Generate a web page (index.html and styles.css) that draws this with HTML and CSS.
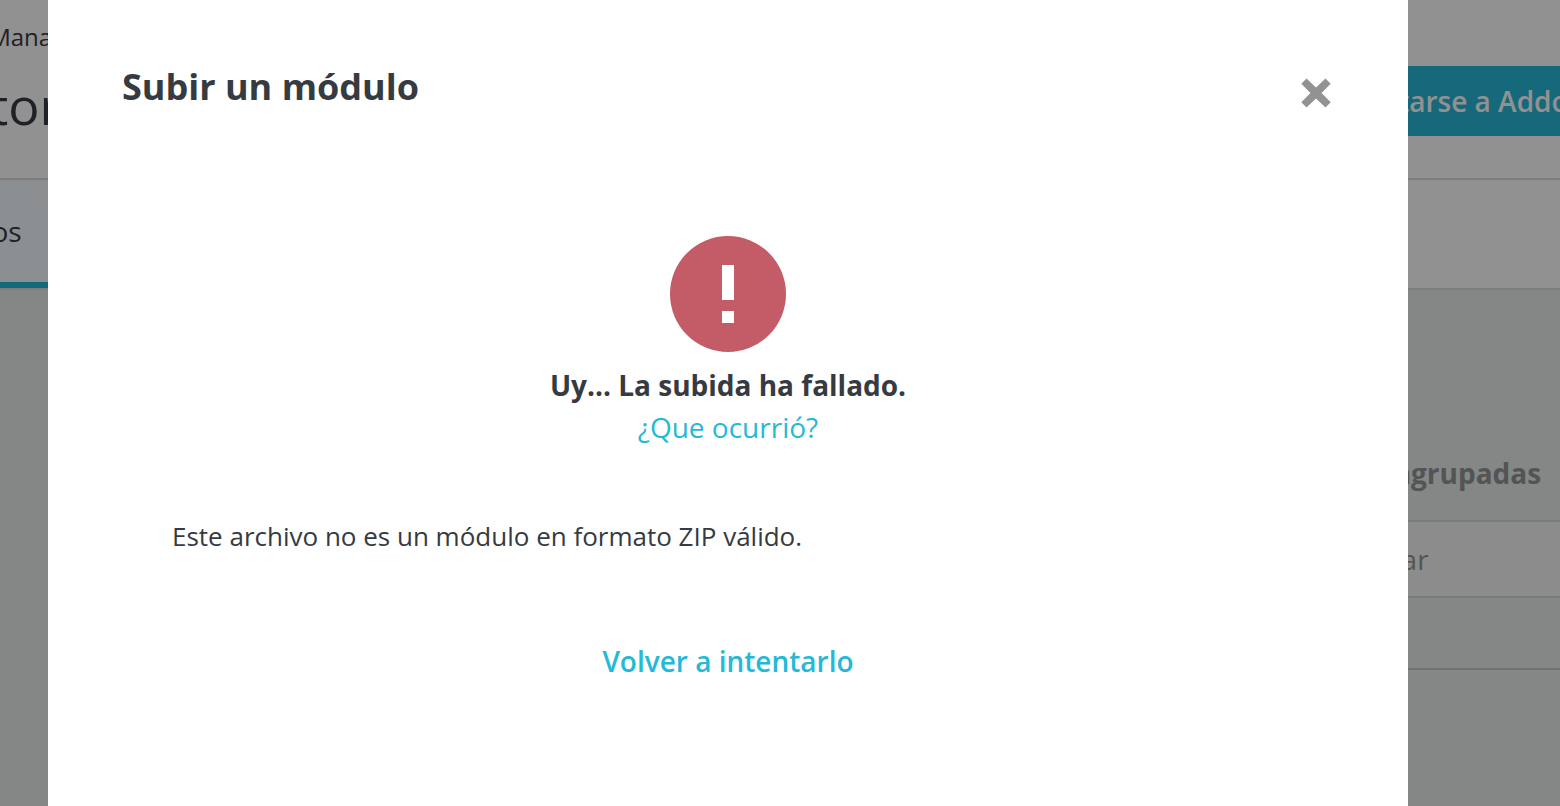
FILE: index.html
```
<!DOCTYPE html>
<html lang="es">
    <head>
        <meta charset="utf-8">
        <title>Subir un módulo</title>
        <link rel="stylesheet" href="styles.css">
    </head>
    <body>
        <div class="page">
            <header class="page-header">
                <div class="heading">
                    <div class="breadcrumb">Module Manager</div>
                    <h1>Gestor</h1>
                </div>
                <button class="btn-connect" type="button">Conectarse a Addons</button>
            </header>
            <nav class="tabs">
                <a class="tab" href="#">Módulos<span class="badge"></span></a>
            </nav>
            <main class="content">
                <div class="filters">
                    <label for="bulk">Acciones agrupadas</label>
                    <select id="bulk">
                        <option>Desinstalar</option>
                    </select>
                </div>
            </main>
        </div>

        <div class="overlay">
            <section class="modal" role="dialog" aria-labelledby="modal-title">
                <header class="modal-header">
                    <h2 id="modal-title">Subir un módulo</h2>
                    <button class="close" type="button" aria-label="Cerrar">
                        <svg viewBox="0 0 30 30" width="30" height="30">
                            <path d="M5.5 0.5 15 9.5 24.5 0.5 29.7 5.7 20.5 15 29.7 24.3 24.5 29.5 15 20.5 5.5 29.5 0.3 24.3 9.5 15 0.3 5.7z" fill="#929292"/>
                        </svg>
                    </button>
                </header>
                <div class="modal-body">
                    <svg class="error-icon" viewBox="0 0 116 116" width="116" height="116" aria-hidden="true">
                        <circle cx="58" cy="58" r="58" fill="#c45c67"/>
                        <path d="M52 29h12v35H52zM52 75h12v12H52z" fill="#fff"/>
                    </svg>
                    <p class="error-title">Uy... La subida ha fallado.</p>
                    <a class="details" href="#">¿Que ocurrió?</a>
                    <p class="error-message">Este archivo no es un módulo en formato ZIP válido.</p>
                    <a class="retry" href="#">Volver a intentarlo</a>
                </div>
            </section>
        </div>
    </body>
</html>
```
FILE: styles.css
```
* {
    box-sizing: border-box;
}

body {
    margin: 0;
    overflow: hidden;
    font-family: "Open Sans", sans-serif;
    font-size: 28px;
    line-height: 42px;
    color: #363a41;
    background-color: #e8edea;
}

h1, h2, p {
    margin: 0;
}

a {
    text-decoration: none;
}

button, select {
    font: inherit;
    border: 0;
}

/* page under the dialog, scrolled sideways */
.page {
    min-height: 100vh;
    margin: 0 -60px 0 -164px;
    overflow: hidden;
}

.page-header {
    display: flex;
    justify-content: space-between;
    height: 180px;
    padding: 16px 0 0 62px;
    background-color: #fff;
    border-bottom: 2px solid #dcdcdc;
}

.breadcrumb {
    font-size: 24px;
}

.page-header h1 {
    font-size: 52px;
    font-weight: 400;
    line-height: 94px;
}

.btn-connect {
    height: 70px;
    margin-top: 50px;
    padding: 0 20px;
    font-weight: 600;
    color: #fff;
    background-color: #25b9d7;
}

.tabs {
    display: flex;
    height: 110px;
    background-color: #fff;
    border-bottom: 2px solid #dcdcdc;
}

.tab {
    position: relative;
    padding: 30px 72px;
    color: #363a41;
    background-color: #f4fbff;
    border-bottom: 6px solid #25b9d7;
}

.badge {
    position: absolute;
    top: 8px;
    right: 34px;
    width: 20px;
    height: 8px;
    border-radius: 4px;
    background-color: #fafafa;
}

.content {
    display: flex;
    justify-content: flex-end;
}

.filters {
    display: flex;
    flex-direction: column;
    width: 356px;
    padding: 162px 0 70px;
    border-bottom: 2px solid #bbcdd2;
}

.filters label {
    font-weight: 700;
    color: #939496;
}

.filters select {
    height: 78px;
    margin-top: 26px;
    padding: 0 16px;
    appearance: none;
    color: #939496;
    background-color: #f7f7f7;
    border: 2px solid #d3dade;
    border-radius: 0;
}

.overlay {
    position: fixed;
    inset: 0;
    display: flex;
    padding: 0 152px 0 48px;
    background-color: rgba(0, 0, 0, .43);
}

.modal {
    flex: 1;
    padding: 60px 74px;
    background-color: #fff;
}

.modal-header {
    display: flex;
    align-items: flex-start;
    justify-content: space-between;
}

.modal-header h2 {
    font-size: 36px;
    line-height: 54px;
}

.close {
    margin: 18px 3px 0 0;
    padding: 0;
    line-height: 0;
    background: none;
}

.modal-body {
    display: flex;
    flex-direction: column;
    align-items: center;
    padding: 122px 50px 0;
}

.error-title {
    margin-top: 12px;
    font-weight: 700;
}

.details, .retry {
    color: #25b9d7;
}

.error-message {
    align-self: flex-start;
    margin-top: 67px;
    font-size: 26px;
}

.retry {
    margin-top: 83px;
    font-weight: 600;
}
```
